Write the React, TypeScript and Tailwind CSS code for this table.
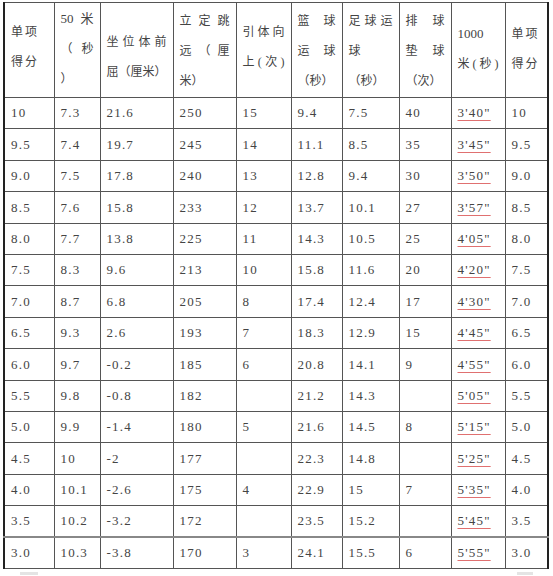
const cols = [50, 46, 73, 63, 55, 51, 57, 52, 54, 43]

type Line = { text: string; justify?: boolean; latin?: boolean }

// header cells: lines + padding-top class
const headers: { lines: Line[]; pt: string; track?: boolean }[] = [
  { lines: [{ text: "单项" }, { text: "得分" }], pt: "pt-[14px]", track: true },
  { lines: [{ text: "50 米", justify: true, latin: true }, { text: "（秒", justify: true }, { text: "）" }], pt: "pt-[1px]" },
  { lines: [{ text: "坐位体前", justify: true }, { text: "屈（厘米）" }], pt: "pt-[24px]" },
  { lines: [{ text: "立定跳", justify: true }, { text: "远（厘", justify: true }, { text: "米）" }], pt: "pt-[3px]" },
  { lines: [{ text: "引体向", justify: true }, { text: "上(次)", justify: true }], pt: "pt-[14px]" },
  { lines: [{ text: "篮球", justify: true }, { text: "运球", justify: true }, { text: "（秒）" }], pt: "pt-[3px]" },
  { lines: [{ text: "足球运", justify: true }, { text: "球" }, { text: "（秒）" }], pt: "pt-[3px]" },
  { lines: [{ text: "排球", justify: true }, { text: "垫球", justify: true }, { text: "（次）" }], pt: "pt-[3px]" },
  { lines: [{ text: "1000", latin: true }, { text: "米(秒)", justify: true }], pt: "pt-[16px]" },
  { lines: [{ text: "单项" }, { text: "得分" }], pt: "pt-[16px]", track: true },
]

const rows = [
  ["10", "7.3", "21.6", "250", "15", "9.4", "7.5", "40", "3'40\"", "10"],
  ["9.5", "7.4", "19.7", "245", "14", "11.1", "8.5", "35", "3'45\"", "9.5"],
  ["9.0", "7.5", "17.8", "240", "13", "12.8", "9.4", "30", "3'50\"", "9.0"],
  ["8.5", "7.6", "15.8", "233", "12", "13.7", "10.1", "27", "3'57\"", "8.5"],
  ["8.0", "7.7", "13.8", "225", "11", "14.3", "10.5", "25", "4'05\"", "8.0"],
  ["7.5", "8.3", "9.6", "213", "10", "15.8", "11.6", "20", "4'20\"", "7.5"],
  ["7.0", "8.7", "6.8", "205", "8", "17.4", "12.4", "17", "4'30\"", "7.0"],
  ["6.5", "9.3", "2.6", "193", "7", "18.3", "12.9", "15", "4'45\"", "6.5"],
  ["6.0", "9.7", "-0.2", "185", "6", "20.8", "14.1", "9", "4'55\"", "6.0"],
  ["5.5", "9.8", "-0.8", "182", "", "21.2", "14.3", "", "5'05\"", "5.5"],
  ["5.0", "9.9", "-1.4", "180", "5", "21.6", "14.5", "8", "5'15\"", "5.0"],
  ["4.5", "10", "-2", "177", "", "22.3", "14.8", "", "5'25\"", "4.5"],
  ["4.0", "10.1", "-2.6", "175", "4", "22.9", "15", "7", "5'35\"", "4.0"],
  ["3.5", "10.2", "-3.2", "172", "", "23.5", "15.2", "", "5'45\"", "3.5"],
  ["3.0", "10.3", "-3.8", "170", "3", "24.1", "15.5", "6", "5'55\"", "3.0"],
]

export default function App() {
  return (
    <div
      className="w-[553px] h-[576px] bg-white pt-[2px] pl-[3px] text-[#444] overflow-hidden"
      style={{ fontFamily: '"Liberation Serif", "Noto Sans CJK SC", serif' }}
    >
      <table className="table-fixed border-collapse w-[546px] border-x-2 border-t-[1.5px] border-b border-[#222]">
        <colgroup>
          {cols.map((w, i) => (
            <col key={i} style={{ width: w }} />
          ))}
        </colgroup>
        <thead>
          <tr className="h-[95px]">
            {headers.map((h, i) => (
              <th
                key={i}
                className={`align-top px-[6px] font-normal text-left text-[12px] leading-[30px] border border-[#555] ${h.pt}`}
              >
                {h.lines.map((l, j) => (
                  <div
                    key={j}
                    className={`whitespace-nowrap ${l.latin ? "text-[13px]" : ""} ${l.justify ? "text-justify [text-align-last:justify]" : ""} ${h.track ? "tracking-[2px]" : ""}`}
                  >
                    {l.text}
                  </div>
                ))}
              </th>
            ))}
          </tr>
        </thead>
        <tbody>
          {rows.map((r, i) => (
            <tr
              key={i}
              className={`h-[31.4px] ${i === 13 ? "border-b-2 border-b-[#888]" : ""}`}
            >
              {r.map((c, j) => (
                <td
                  key={j}
                  className="px-[6px] align-middle text-[13px] tracking-[1.2px] border border-[#555] whitespace-nowrap"
                >
                  {j === 8 ? (
                    <span className="underline decoration-[#e07070] decoration-1 underline-offset-[3px]">{c}</span>
                  ) : (
                    c
                  )}
                </td>
              ))}
            </tr>
          ))}
        </tbody>
      </table>
      <div className="flex justify-between pl-[17px] pr-[20px] mt-[3px]">
        <div className="w-[18px] h-[3px] bg-[#e4e4e4]" />
        <div className="w-[16px] h-[3px] bg-[#e4e4e4]" />
      </div>
    </div>
  )
}
